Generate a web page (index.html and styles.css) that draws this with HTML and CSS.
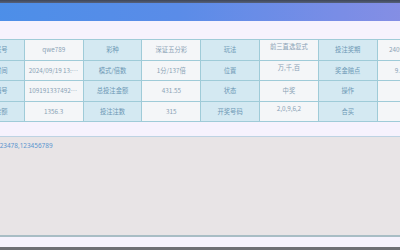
FILE: index.html
```html
<!DOCTYPE html>
<html lang="zh-CN">
<head>
<meta charset="utf-8">
<title>注单详情</title>
<link rel="stylesheet" href="styles.css">
</head>
<body>
<div class="page">
  <div class="topbar"></div>
  <div class="header"></div>
  <div class="content">
    <div class="info">
      <div class="lbl">用户账号</div><div class="val">qwe789</div>
      <div class="lbl">彩种</div><div class="val">深证五分彩</div>
      <div class="lbl">玩法</div><div class="val up">前三直选复式</div>
      <div class="lbl">投注奖期</div><div class="val">2409190837</div>

      <div class="lbl">投注时间</div><div class="val">2024/09/19 13:35:21</div>
      <div class="lbl">模式/倍数</div><div class="val">1分/137倍</div>
      <div class="lbl">位置</div><div class="val up">万,千,百</div>
      <div class="lbl">奖金赔点</div><div class="val">9.85/0.5</div>

      <div class="lbl">注单编号</div><div class="val">1091913374924517</div>
      <div class="lbl">总投注金额</div><div class="val">431.55</div>
      <div class="lbl">状态</div><div class="val">中奖</div>
      <div class="lbl">操作</div><div class="val"></div>

      <div class="lbl">中奖金额</div><div class="val">1356.3</div>
      <div class="lbl">投注注数</div><div class="val">315</div>
      <div class="lbl">开奖号码</div><div class="val up">2,0,9,6,2</div>
      <div class="lbl">合买</div><div class="val"></div>
    </div>
    <div class="editor">
      <div class="code">123478,123456789</div>
    </div>
  </div>
  <div class="footer"></div>
</div>
</body>
</html>
```

FILE: styles.css
```css
html, body {
  margin: 0;
  padding: 0;
  background: #f6f2fd;
  overflow: hidden;
}

.page {
  width: 471.5px;
  margin-left: -35px;
  display: flex;
  flex-direction: column;
  font-family: "Noto Sans CJK SC", "Noto Sans", sans-serif;
}

.topbar {
  height: 3px;
  flex-shrink: 0;
  background: linear-gradient(180deg, #3e4658, #56617a);
}

.header {
  height: 18px;
  flex-shrink: 0;
  background: linear-gradient(90deg, #4a8fe8 0%, #5a8ce8 45%, #7a8de6 80%, #8b8fe3 100%);
}

.content {
  padding-top: 18px;
  display: flex;
  flex-direction: column;
}

.info {
  display: grid;
  grid-template-columns: repeat(8, 57.8px);
  grid-auto-rows: 19.5px;
  gap: 1px;
  border: 1px solid #9fcbd8;
  background: #9fcbd8;
  font-size: 6.3px;
}

.info > div {
  line-height: 19.5px;
  text-align: center;
  padding: 0 4px;
  white-space: nowrap;
  overflow: hidden;
  text-overflow: ellipsis;
}

.info .lbl {
  background: #d4e9f2;
  color: #6b97b4;
}

.info .val {
  background: #f4f6f8;
  color: #8aa2b5;
}

.info .val.up {
  line-height: 14px;
}

.editor {
  margin-top: 14px;
  height: 98px;
  background: #e8e4e6;
  border-top: 1px solid #bdd3e3;
  border-bottom: 2px solid #a8bdc5;
}

.code {
  padding: 5px 0 0 31px;
  font-size: 6.4px;
  line-height: 8px;
  color: #5b95cf;
  font-family: "Noto Sans", "Noto Sans CJK SC", sans-serif;
}

.footer {
  margin-top: 10px;
  height: 3px;
  background: #6f6f76;
}
```
